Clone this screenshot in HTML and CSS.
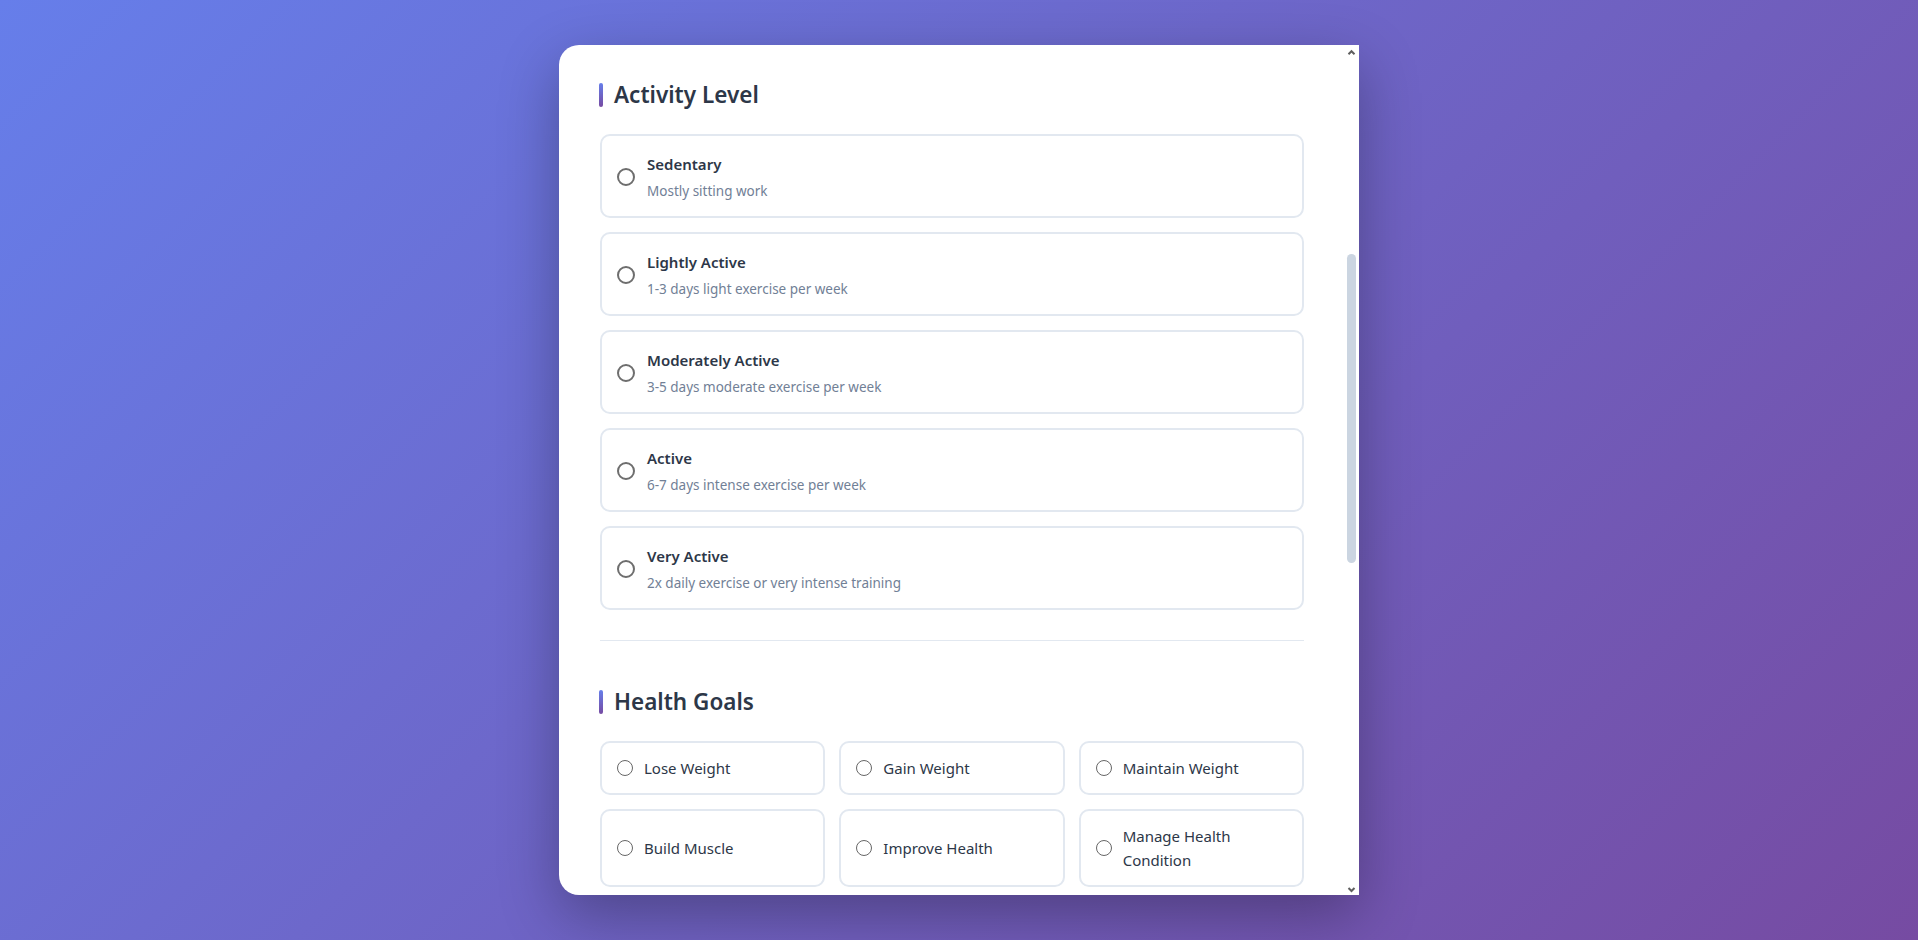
FILE: index.html
```html
<!DOCTYPE html>
<html lang="en">
<head>
<meta charset="utf-8">
<title>Health Profile</title>
<link rel="stylesheet" href="styles.css">
</head>
<body>
<div class="page">
  <div class="panel">
    <div class="panel-body">
      <section class="section">
        <h2 class="section-title">Activity Level</h2>
        <div class="option-list">
          <label class="option">
            <input type="radio" name="activity" class="radio radio-lg">
            <span class="option-text"><span class="option-title">Sedentary</span><span class="option-desc">Mostly sitting work</span></span>
          </label>
          <label class="option">
            <input type="radio" name="activity" class="radio radio-lg">
            <span class="option-text"><span class="option-title">Lightly Active</span><span class="option-desc">1-3 days light exercise per week</span></span>
          </label>
          <label class="option">
            <input type="radio" name="activity" class="radio radio-lg">
            <span class="option-text"><span class="option-title">Moderately Active</span><span class="option-desc">3-5 days moderate exercise per week</span></span>
          </label>
          <label class="option">
            <input type="radio" name="activity" class="radio radio-lg">
            <span class="option-text"><span class="option-title">Active</span><span class="option-desc">6-7 days intense exercise per week</span></span>
          </label>
          <label class="option">
            <input type="radio" name="activity" class="radio radio-lg">
            <span class="option-text"><span class="option-title">Very Active</span><span class="option-desc">2x daily exercise or very intense training</span></span>
          </label>
        </div>
      </section>

      <section class="section">
        <h2 class="section-title">Health Goals</h2>
        <div class="goal-grid">
          <label class="goal"><input type="radio" name="goal" class="radio radio-sm"><span>Lose Weight</span></label>
          <label class="goal"><input type="radio" name="goal" class="radio radio-sm"><span>Gain Weight</span></label>
          <label class="goal"><input type="radio" name="goal" class="radio radio-sm"><span>Maintain Weight</span></label>
          <label class="goal"><input type="radio" name="goal" class="radio radio-sm"><span>Build Muscle</span></label>
          <label class="goal"><input type="radio" name="goal" class="radio radio-sm"><span>Improve Health</span></label>
          <label class="goal"><input type="radio" name="goal" class="radio radio-sm"><span>Manage Health Condition</span></label>
        </div>
      </section>
    </div>

    <div class="scrollbar" aria-hidden="true">
      <div class="sb-button">
        <svg width="15" height="15" viewBox="0 0 15 15"><path d="M4.5 9.2 L7.5 6.2 L10.5 9.2" fill="none" stroke="#5f5f5f" stroke-width="2"/></svg>
      </div>
      <div class="sb-track"><div class="sb-thumb"></div></div>
      <div class="sb-button">
        <svg width="15" height="15" viewBox="0 0 15 15"><path d="M4.5 8 L7.5 11 L10.5 8" fill="none" stroke="#5f5f5f" stroke-width="2"/></svg>
      </div>
    </div>
  </div>
</div>
</body>
</html>
```

FILE: styles.css
```css
* { box-sizing: border-box; }

html, body {
  margin: 0;
  height: 100%;
}

body {
  font-family: "Noto Sans", "Open Sans", sans-serif;
  color: #2d3748;
  background: linear-gradient(135deg, #667eea 0%, #764ba2 100%);
}

.page {
  height: 100vh;
  display: flex;
  align-items: center;
  justify-content: center;
}

.panel {
  width: 800px;
  height: 850px;
  display: flex;
  background: #fff;
  border-radius: 20px 0 0 20px;
  box-shadow: 0 20px 60px rgba(0, 0, 0, 0.3);
  overflow: hidden;
}

.panel-body {
  flex: 1;
  min-width: 0;
  overflow: hidden;
  padding: 30px 40px 0 41px;
}

.scrollbar {
  width: 15px;
  flex: none;
  display: flex;
  flex-direction: column;
  background: #fff;
}
.sb-button {
  height: 15px;
  flex: none;
}
.sb-button svg { display: block; }
.sb-track {
  flex: 1;
}
.sb-thumb {
  margin: 194px 0 0 3px;
  width: 9px;
  height: 309px;
  border-radius: 5px;
  background: #cbd5e1;
}

.section {
  padding-bottom: 30px;
  margin-bottom: 41px;
  border-bottom: 1px solid #e2e8f0;
}

.section-title {
  display: flex;
  align-items: center;
  gap: 11px;
  margin: 0 0 19px -1px;
  font-size: 22.5px;
  line-height: 40px;
  font-weight: 600;
  color: #2d3748;
}
.section-title::before {
  content: "";
  width: 4px;
  height: 24px;
  border-radius: 2px;
  background: linear-gradient(180deg, #667eea 0%, #764ba2 100%);
}

.option-list {
  display: flex;
  flex-direction: column;
  gap: 14px;
}

.option {
  display: flex;
  align-items: center;
  min-height: 84px;
  padding: 17px 15px 15px;
  border: 2px solid #e2e8f0;
  border-radius: 10px;
  background: #fff;
}

.radio {
  appearance: none;
  -webkit-appearance: none;
  flex: none;
  margin: 0;
  border-radius: 50%;
  background: #fff;
}
.radio-lg {
  width: 18px;
  height: 18px;
  border: 2px solid #6e6e6e;
  margin-right: 12px;
}
.radio-sm {
  width: 16px;
  height: 16px;
  border: 1.7px solid #666;
  margin-right: 11px;
}

.option-text {
  display: flex;
  flex-direction: column;
}
.option-title {
  display: block;
  font-size: 15px;
  line-height: 22px;
  font-weight: 600;
  color: #2d3748;
}
.option-desc {
  display: block;
  margin-top: 6px;
  font-size: 13.5px;
  line-height: 20px;
  color: #718096;
}

.goal-grid {
  display: grid;
  grid-template-columns: repeat(3, 1fr);
  gap: 14px;
}

.goal {
  display: flex;
  align-items: center;
  padding: 13px 15px;
  border: 2px solid #e2e8f0;
  border-radius: 10px;
  font-size: 15px;
  line-height: 24px;
  color: #2d3748;
}
```
